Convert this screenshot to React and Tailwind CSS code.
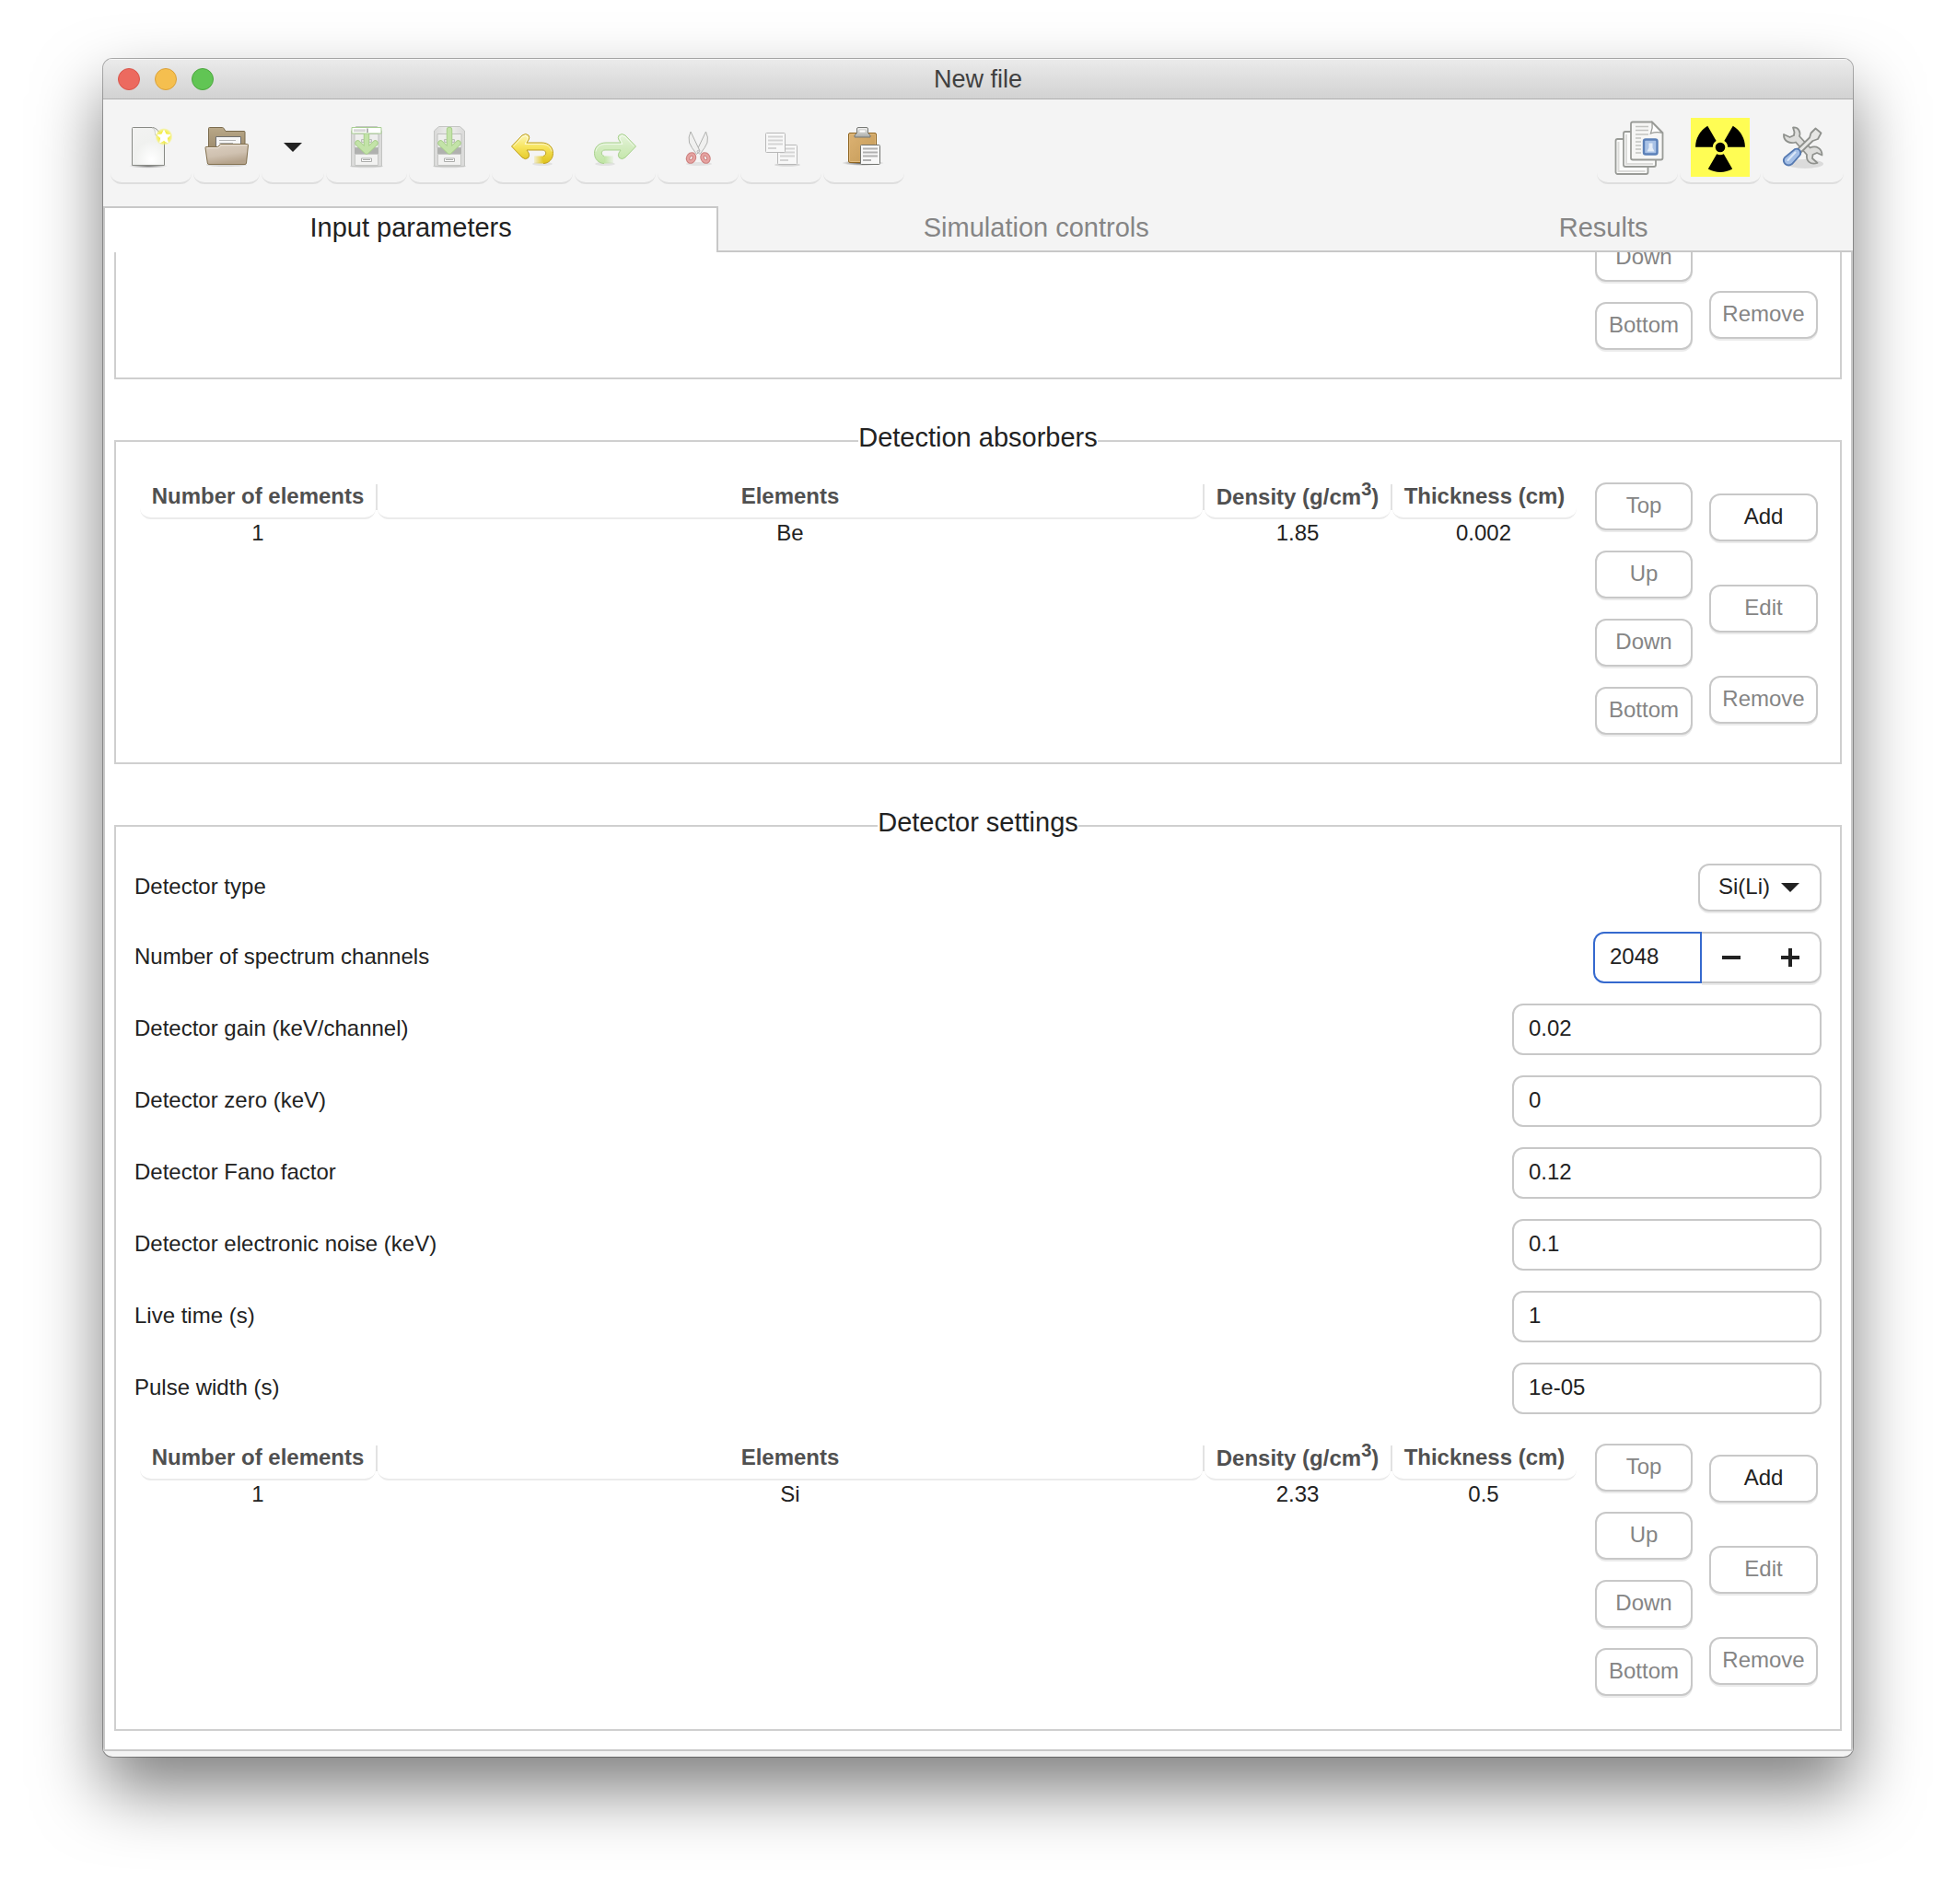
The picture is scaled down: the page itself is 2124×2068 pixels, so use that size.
import React from "react";

const SANS = "font-['Liberation_Sans',Arial,sans-serif]";

function NewIcon() {
  return (
    <svg viewBox="0 0 48 48" className="size-12" aria-hidden="true">
      <defs>
        <radialGradient id="nPage" cx=".6" cy=".85" r="1">
          <stop offset="0" stopColor="#fff" />
          <stop offset=".5" stopColor="#f0f1ef" />
          <stop offset="1" stopColor="#f3f3f2" />
        </radialGradient>
        <radialGradient id="nGlow">
          <stop offset="0" stopColor="#fff" />
          <stop offset=".5" stopColor="#f3ec3c" />
          <stop offset=".8" stopColor="#f5f16a" stopOpacity=".8" />
          <stop offset="1" stopColor="#f5f16a" stopOpacity="0" />
        </radialGradient>
        <radialGradient id="nShade">
          <stop offset="0" stopColor="#000" stopOpacity=".5" />
          <stop offset="1" stopColor="#000" stopOpacity="0" />
        </radialGradient>
      </defs>
      <ellipse cx="21" cy="44.300" rx="21" ry="2.500" fill="url(#nShade)" />
      <path d="M4.500 2.500h21c5 .5 7 5 11.500 9.500q1.500 2 1.500 4v27.500h-35V3.500q0-1 1-1z" fill="url(#nPage)" stroke="#888a85" />
      <path d="M25 3c4 1 3 5 4 8 4 0 7 0 9 4" fill="#fff" stroke="#c6c8c3" />
      <circle cx="38" cy="12.500" r="9.500" fill="url(#nGlow)" />
      <path d="M38 5.500l2.100 4.500 4.900.6-3.600 3.400.9 4.900-4.300-2.400-4.300 2.400.9-4.900-3.600-3.400 4.900-.6z" fill="#fff" stroke="#fff" strokeWidth="1" strokeLinejoin="round" />
    </svg>
  );
}

function OpenIcon() {
  return (
    <svg viewBox="0 0 48 48" className="size-12" aria-hidden="true">
      <defs>
        <linearGradient id="oBack" x1="0" y1="0" x2="0" y2="1">
          <stop offset="0" stopColor="#b9a888" />
          <stop offset="1" stopColor="#8f7d60" />
        </linearGradient>
        <linearGradient id="oFront" x1="0" y1="0" x2=".3" y2="1">
          <stop offset="0" stopColor="#dccfc0" />
          <stop offset=".6" stopColor="#cfc1b0" />
          <stop offset="1" stopColor="#b5a38c" />
        </linearGradient>
      </defs>
      <ellipse cx="24" cy="43" rx="22" ry="2" fill="#000" opacity=".12" />
      <path d="M4.500 38V3.500q0-1 1-1h14q1 0 1.500 1l2 3h20q1 0 1 1V36z" fill="url(#oBack)" stroke="#7a6a4c" />
      <path d="M12.500 26V12.500h27V26z" fill="#f7f7f7" stroke="#6f6f6f" />
      <path d="M16 16.500h18M16 19.500h15" stroke="#b4b4b4" />
      <path d="M1.500 23.500h13l3-3h29q1 0 1 1l-2 19.500q-.3 1.500-1.500 1.500h-39q-1.500 0-1.700-1.500l-2.300-16.500q0-1 .5-1z" fill="url(#oFront)" stroke="#82704f" />
      <path d="M2.800 24.700h12.200l3-3h28" fill="none" stroke="#efe7dc" />
    </svg>
  );
}

function CabinetIcon({ as }) {
  const id = as ? "ca" : "cb";
  return (
    <svg viewBox="0 0 48 48" className="size-12" aria-hidden="true">
      <defs>
        <linearGradient id={id} x1="0" y1="0" x2="1" y2="0">
          <stop offset="0" stopColor="#d9d9d8" />
          <stop offset=".5" stopColor="#efefee" />
          <stop offset="1" stopColor="#d9d9d8" />
        </linearGradient>
      </defs>
      <ellipse cx="24" cy="44.500" rx="18" ry="1.800" fill="#000" opacity=".13" />
      <path d="M7.500 44.500V6l5-4.500h23l5 4.500v38.500z" fill={`url(#${id})`} stroke="#c3c4c2" />
      <path d="M11 9.500h26v15H11z" fill="#eeeeed" stroke="#c0c1bf" />
      <path d="M11 24.500h26v7H11z" fill="#b0b1af" />
      <path d="M11.500 31.500h25v12h-25z" fill="#f2f2f1" stroke="#c5c6c4" />
      <path d="M18.500 15.500h11v3h-11z" fill="#e3e3e2" stroke="#bdbebc" />
      <path d="M18.500 36h11v3.500h-11z" fill="#fff" stroke="#adaeac" />
      <path d="M20 37.500h8" stroke="#adaeac" />
      <path d="M24 5v20M14.500 19.500l9.500 9 9.500-9" fill="none" stroke="#a9cf8c" strokeWidth="6.500" strokeLinecap="round" strokeLinejoin="round" />
      <path d="M24 5v20M14.500 19.500l9.500 9 9.500-9" fill="none" stroke="#c3e3a8" strokeWidth="4.500" strokeLinecap="round" strokeLinejoin="round" />
      {as && (
        <g>
          <path d="M8 2.500h32v6.500H8z" fill="#fff" stroke="#a9cf93" />
          <path d="M10 4.200h13v3H10z" fill="#d8d8d8" />
          <path d="M25 3.500v4.500" stroke="#666" />
        </g>
      )}
    </svg>
  );
}

function ReturnArrow({ redo }) {
  const id = redo ? "redoFill" : "undoFill";
  const edge = redo ? "#a9d18f" : "#bd9e21";
  return (
    <svg viewBox="0 0 48 48" className="size-12" aria-hidden="true">
      <defs>
        <linearGradient id={id} x1="0" y1="0" x2="0" y2="1">
          <stop offset="0" stopColor={redo ? "#e6f4dc" : "#fdf7b8"} />
          <stop offset=".45" stopColor={redo ? "#d3ecc0" : "#f7e45c"} />
          <stop offset="1" stopColor={redo ? "#c0e5a4" : "#dfc21c"} />
        </linearGradient>
        <linearGradient id={id + "F"} x1="24" y1="0" x2="36" y2="0" gradientUnits="userSpaceOnUse">
          <stop offset="0" stopColor={redo ? "#c0e5a4" : "#e8d02c"} stopOpacity="0" />
          <stop offset="1" stopColor={redo ? "#c0e5a4" : "#e3c824"} />
        </linearGradient>
      </defs>
      <g transform={redo ? "matrix(-1 0 0 1 48 0)" : undefined}>
        <ellipse cx="35" cy="42" rx="11" ry="2" fill="#000" opacity=".07" />
        <path d="M26 33.500h10.500v8H26z" fill={`url(#${id}F)`} />
        <path d="M1.500 23L13 11q4-3 7 0 1.500 2.500 0 5l-2 3h16c8 0 12.500 5 12.500 11.500 0 6-4.500 11-10.500 11v-8c4-.5 4-6.500-.5-6.500H18l2 3q1.500 3-.5 5.500-3 2.500-6.500-.5z" fill={`url(#${id})`} />
        <path d="M36 41.500c6 0 10.500-5 10.500-11C46.500 24 42 19 34 19H18l2-3q1.500-2.500 0-5-3-3-7 0L1.500 23 13 35q3.500 3 6.500.5 2-2.500.5-5.500l-2-3h17c4.500 0 5 5.500 1 6.500" fill="none" stroke={edge} />
        <path d="M3.500 23L13.500 12.500q3-2 5 0 1 2-.5 4l-2 4h18c6 0 10 3 11 8" fill="none" stroke="#fff" opacity=".6" />
      </g>
    </svg>
  );
}

function CutIcon() {
  return (
    <svg viewBox="0 0 48 48" className="size-12" aria-hidden="true">
      <ellipse cx="25" cy="42" rx="14" ry="2" fill="#000" opacity=".07" />
      <path d="M32.500 7q3 6 1.500 12-2 5-8 12.500L22.500 28z" fill="#f0f0ef" stroke="#b0b1af" />
      <path d="M16 7q-3 6-1.500 12 2 5 8 12.500L26 28z" fill="#f0f0ef" stroke="#b0b1af" />
      <g fill="none">
        <g stroke="#cb7f7d" strokeWidth="4.600">
          <ellipse cx="16.500" cy="35.500" rx="3.200" ry="4.200" transform="rotate(25 16.500 35.500)" />
          <ellipse cx="32" cy="35.500" rx="3.200" ry="4.200" transform="rotate(-25 32 35.500)" />
        </g>
        <g stroke="#e6a3a1" strokeWidth="2.600">
          <ellipse cx="16.500" cy="35.500" rx="3.200" ry="4.200" transform="rotate(25 16.500 35.500)" />
          <ellipse cx="32" cy="35.500" rx="3.200" ry="4.200" transform="rotate(-25 32 35.500)" />
        </g>
      </g>
      <circle cx="24.300" cy="28.500" r="1.300" fill="#ddd" stroke="#aaa" strokeWidth=".6" />
    </svg>
  );
}

function Sheet({ x, y, s, stroke, line }) {
  return (
    <g>
      <rect x={x} y={y} width={s} height={s} rx="1" fill="#f8f8f8" stroke={stroke} />
      <path
        d={`M${x + 2.5} ${y + 4}h${s - 5}M${x + 2.5} ${y + 8}h${s - 5}M${x + 2.5} ${y + 12}h${s - 5}M${x + 2.5} ${y + 16.500}h9`}
        stroke={line}
        strokeWidth="2"
      />
    </g>
  );
}

function CopyIcon() {
  return (
    <svg viewBox="0 0 48 48" className="size-12" aria-hidden="true">
      <ellipse cx="31" cy="43" rx="14" ry="1.800" fill="#000" opacity=".12" />
      <Sheet x={20.500} y={21.500} s={21} stroke="#b8b8b8" line="#d4d4d4" />
      <Sheet x={7.500} y={8.500} s={21} stroke="#b8b8b8" line="#d4d4d4" />
    </svg>
  );
}

function PasteIcon() {
  return (
    <svg viewBox="0 0 48 48" className="size-12" aria-hidden="true">
      <defs>
        <linearGradient id="board" x1="0" y1="0" x2="1" y2="1">
          <stop offset="0" stopColor="#dcb273" />
          <stop offset="1" stopColor="#c49a57" />
        </linearGradient>
        <linearGradient id="clip" x1="0" y1="0" x2="0" y2="1">
          <stop offset="0" stopColor="#f4f4f4" />
          <stop offset="1" stopColor="#a7a9a5" />
        </linearGradient>
        <radialGradient id="pShade">
          <stop offset="0" stopColor="#000" stopOpacity=".7" />
          <stop offset="1" stopColor="#000" stopOpacity="0" />
        </radialGradient>
      </defs>
      <ellipse cx="23" cy="41" rx="23" ry="3" fill="url(#pShade)" />
      <rect x="7.500" y="8.500" width="30" height="32" rx="1.500" fill="url(#board)" stroke="#8f6420" />
      <rect x="8.500" y="9.500" width="28" height="30" rx="1" fill="none" stroke="#e0bb80" />
      <path d="M16.500 8.500V4q0-1.500 1.500-1.500h9q1.500 0 1.500 1.500v4.500l2.500 2.500v2h-17v-2z" fill="url(#clip)" stroke="#777975" />
      <path d="M19 5h7v3h-7z" fill="#fff" stroke="#c4c5c2" strokeWidth=".8" />
      <Sheet x={20.500} y={21.500} s={21} stroke="#70726e" line="#b0b0b0" />
    </svg>
  );
}

function PagesIcon() {
  return (
    <svg viewBox="0 0 64 64" className="size-16" aria-hidden="true">
      <g fill="#fbfbfa" stroke="#999b97" strokeWidth="1.800">
        <rect x="8.500" y="23" width="35" height="38" rx="2" />
        <rect x="17" y="15" width="35" height="38" rx="2" />
        <path d="M27 4.500h21L59.500 16v27.500q0 2-2 2H27q-2 0-2-2v-37q0-2 2-2z" fill="#f6f6f5" />
      </g>
      <path d="M11.500 26v32h29M20 18v32h29" fill="none" stroke="#dcdcda" strokeWidth="2" />
      <path d="M48 5q1 6-1.500 12 6.500-2.500 12.500-.5z" fill="#fff" stroke="#999b97" strokeWidth="1.300" />
      <path d="M30 9.500h14M30 13.500h14M30 18h14M30 22h6M30 26h6M30 30h6M30 34h6M30 38h6" stroke="#c2c3c0" strokeWidth="1.500" />
      <rect x="39" y="23.500" width="14.500" height="16" rx="2" fill="#a9c2e6" stroke="#5b80b8" strokeWidth="2.400" />
      <path d="M44.500 27.500h4v5l2 4h-8l2-4z" fill="#e4edf8" />
    </svg>
  );
}

const BLADE = "M28.200 39.200a8 8 0 0 0 7.600 0L45.200 55.500a27 27 0 0 1-26.400 0z";

function RadiationIcon() {
  return (
    <svg viewBox="0 0 64 64" className="size-16" aria-hidden="true">
      <rect width="64" height="64" fill="#fffd54" />
      <circle cx="32" cy="32" r="5.300" />
      <path d={BLADE} />
      <path d={BLADE} transform="rotate(120 32 32)" />
      <path d={BLADE} transform="rotate(240 32 32)" />
    </svg>
  );
}

function ToolsIcon() {
  return (
    <svg viewBox="0 0 48 48" className="size-12" aria-hidden="true">
      <ellipse cx="26" cy="42" rx="20" ry="5" fill="#000" opacity=".1" />
      <g stroke="#8f918d" strokeWidth="1.800" strokeLinejoin="round">
        <path d="M13 2.500c6-.5 8.500 4.500 7 9.500l11.500 12.500c7-3 13 1 13 8l-5.500-2.500-4.500 2-.5 4 5.500 5c-8 2.500-12.500-2.500-11.500-9L16 18.500C9 20.500 2.500 17 3 10l6.500 3 4.500-2 .5-3.500z" fill="#dededc" />
        <path d="M37.500 3.500l6 5-3.500 6.500-5.500 2L21 30l-3.500-3.500L31 13.500l1.500-5z" fill="#e6e6e4" />
      </g>
      <path d="M15 26q3.500-1 5.500 1.500 1.500 3 0 5L12 42q-4 3-7.500 0-3-3.500-.5-7z" fill="#a4bfe6" stroke="#5478b0" strokeWidth="1.800" />
      <path d="M15.500 29.500L7.500 38" stroke="#dbe7f7" strokeWidth="2" strokeLinecap="round" />
    </svg>
  );
}

function Triangle() {
  return (
    <svg viewBox="0 0 20 10" className="h-[10px] w-5 shrink-0" aria-hidden="true">
      <path d="M0 0h20L10 10z" fill="#222" />
    </svg>
  );
}

function ToolButton({ label, width = "w-[88px]", disabled, children }) {
  return (
    <button
      type="button"
      aria-label={label}
      disabled={disabled}
      className={`${width} flex h-20 shrink-0 items-center justify-center rounded-b-[12px] border-b-2 border-[#dedede] pt-[2px]`}
    >
      {children}
    </button>
  );
}

const TOOLS_LEFT = [
  { label: "New", icon: <NewIcon /> },
  { label: "Open", icon: <OpenIcon />, width: "w-[72px]" },
  { label: "Open recent", icon: <Triangle />, width: "w-[68px]" },
  { label: "Save as", icon: <CabinetIcon as />, disabled: true },
  { label: "Save", icon: <CabinetIcon />, disabled: true },
  { label: "Undo", icon: <ReturnArrow /> },
  { label: "Redo", icon: <ReturnArrow redo />, disabled: true },
  { label: "Cut", icon: <CutIcon />, disabled: true },
  { label: "Copy", icon: <CopyIcon />, disabled: true },
  { label: "Paste", icon: <PasteIcon /> },
];

const TOOLS_RIGHT = [
  { label: "Batch mode", icon: <PagesIcon /> },
  { label: "X-ray sources", icon: <RadiationIcon /> },
  { label: "Preferences", icon: <ToolsIcon /> },
];

function Toolbar() {
  return (
    <div role="toolbar" className="flex justify-between pt-3 pr-[10px] pb-6 pl-2">
      {[TOOLS_LEFT, TOOLS_RIGHT].map((tools, i) => (
        <div key={i} className="flex gap-[2px]">
          {tools.map((t) => (
            <ToolButton key={t.label} label={t.label} width={t.width} disabled={t.disabled}>
              {t.icon}
            </ToolButton>
          ))}
        </div>
      ))}
    </div>
  );
}

function Tabs() {
  const base = "flex-auto h-[50px] text-[29px] leading-8";
  return (
    <div role="tablist" className="flex">
      <button type="button" role="tab" aria-selected="true" className={`${base} border-2 border-b-0 border-[#c8c8c8] bg-white pb-[6px] text-[#222]`}>
        Input parameters
      </button>
      {["Simulation controls", "Results"].map((t) => (
        <button key={t} type="button" role="tab" aria-selected="false" className={`${base} border-b-2 border-[#c8c8c8] pt-[2px] pb-1 text-[#858585]`}>
          {t}
        </button>
      ))}
    </div>
  );
}

function Btn({ children, enabled, width }) {
  return (
    <button
      type="button"
      disabled={!enabled}
      className={`${width} ${enabled ? "text-[#222]" : "text-[#858585]"} h-[52px] shrink-0 rounded-[12px] border-2 border-[#c8c8c8] bg-white pb-[2px] text-2xl shadow-[0_2px_0_#ebebeb]`}
    >
      {children}
    </button>
  );
}

function OrderButtons({ labels = ["Top", "Up", "Down", "Bottom"] }) {
  return (
    <div className="flex flex-col gap-[22px]">
      {labels.map((l) => (
        <Btn key={l} width="w-[106px]">{l}</Btn>
      ))}
    </div>
  );
}

const COLUMNS = [
  { title: "Number of elements", width: "w-[258px]" },
  { title: "Elements", width: "" },
  { title: <>Density (g/cm<sup className="text-[20px]">3</sup>)</>, width: "w-[204px]", leading: "leading-8" },
  { title: "Thickness (cm)", width: "w-[200px]" },
];

function LayerTable({ label, row }) {
  return (
    <div className="flex items-start">
      <table aria-label={label} className="w-full table-fixed text-2xl">
        <thead>
          <tr>
            {COLUMNS.map((c, i) => (
              <th key={i} scope="col" className={`${c.width} p-0 font-bold text-[#505050]`}>
                <div className="flex">
                  <div className={`${c.leading ?? "leading-[30px]"} h-10 flex-1 rounded-b-[12px] border-b-2 border-[#ebebeb] text-center whitespace-nowrap`}>
                    {c.title}
                  </div>
                  {i < 3 && <div className="mt-[2px] h-7 w-[2px] bg-[#e2e2e2]" />}
                </div>
              </th>
            ))}
          </tr>
        </thead>
        <tbody>
          <tr>
            {row.map((v, i) => (
              <td key={i} className="p-0 pr-[2px] text-center leading-[30px] text-[#222]">{v}</td>
            ))}
          </tr>
        </tbody>
      </table>
      <div className="ml-5">
        <OrderButtons />
      </div>
      <div className="mt-3 ml-[18px] flex flex-col gap-[47px]">
        <Btn width="w-[118px]" enabled>Add</Btn>
        <Btn width="w-[118px]">Edit</Btn>
        <Btn width="w-[118px]">Remove</Btn>
      </div>
    </div>
  );
}

function Group({ title, className, children }) {
  return (
    <section className={`${className} mx-[10px] border-2 border-[#cfcfcf]`}>
      <h2 className="mx-auto -mt-5 h-8 w-fit bg-white text-[29px] leading-[30px] text-[#222]">{title}</h2>
      {children}
    </section>
  );
}

const FIELDS = [
  ["gain", "Detector gain (keV/channel)", "0.02"],
  ["zero", "Detector zero (keV)", "0"],
  ["fano", "Detector Fano factor", "0.12"],
  ["noise", "Detector electronic noise (keV)", "0.1"],
  ["live", "Live time (s)", "1"],
  ["pulse", "Pulse width (s)", "1e-05"],
];

function DetectorForm() {
  const row = "flex items-center justify-between";
  return (
    <div className="flex flex-col gap-[22px] px-5 text-2xl text-[#222]">
      <div className={row}>
        <label htmlFor="type" className="pb-[2px]">Detector type</label>
        <div className="relative flex items-center">
          <select id="type" defaultValue="Si(Li)" className="h-[52px] w-[134px] appearance-none rounded-[12px] border-2 border-[#c8c8c8] bg-white pb-[2px] pl-5 shadow-[0_2px_0_#ebebeb]">
            <option>Si(Li)</option>
          </select>
          <div className="pointer-events-none absolute right-6">
            <Triangle />
          </div>
        </div>
      </div>
      <div className={row}>
        <label htmlFor="channels" className="pb-[2px]">Number of spectrum channels</label>
        <div className="flex h-14">
          <input id="channels" type="text" defaultValue="2048" className="w-[118px] rounded-l-[12px] border-2 border-[#3569ce] bg-white pb-[2px] pl-4 outline-none" />
          <div className="flex w-[130px] rounded-r-[12px] border-2 border-l-0 border-[#c8c8c8] shadow-[0_2px_0_#ebebeb]">
            <button type="button" aria-label="Decrease" className="flex flex-1 items-center justify-center">
              <svg viewBox="0 0 20 20" className="size-5"><path d="M0 8h20v4H0z" fill="#222" /></svg>
            </button>
            <button type="button" aria-label="Increase" className="flex flex-1 items-center justify-center">
              <svg viewBox="0 0 20 20" className="size-5"><path d="M0 8h8V0h4v8h8v4h-8v8H8v-8H0z" fill="#222" /></svg>
            </button>
          </div>
        </div>
      </div>
      {FIELDS.map(([id, label, value]) => (
        <div key={id} className={row}>
          <label htmlFor={id} className="pb-[2px]">{label}</label>
          <input id={id} type="text" defaultValue={value} className="h-14 w-[336px] rounded-[12px] border-2 border-[#c8c8c8] bg-white pb-[2px] pl-4 outline-none" />
        </div>
      ))}
    </div>
  );
}

export default function App() {
  return (
    <div className={`${SANS} min-h-screen bg-white px-28 pt-16 pb-40`}>
      <div className="overflow-hidden rounded-[10px] bg-[#f4f4f4] shadow-[0_0_0_1px_rgba(0,0,0,0.3),0_36px_72px_rgba(0,0,0,0.5)]">
        <header className="grid h-11 grid-cols-3 items-center border-b border-[#b0b0b0] bg-linear-to-b from-[#ebebeb] to-[#d2d2d2] px-4 shadow-[inset_0_1px_0_#f6f6f6]">
          <div className="flex gap-4">
            <button type="button" aria-label="Close" className="size-6 rounded-full border border-[#d8564c] bg-[#ec6a5f]" />
            <button type="button" aria-label="Minimise" className="size-6 rounded-full border border-[#d9a13b] bg-[#f5bf4f]" />
            <button type="button" aria-label="Zoom" className="size-6 rounded-full border border-[#4da73f] bg-[#61c554]" />
          </div>
          <h1 className="text-center text-[27px] leading-8 text-[#404040]">New file</h1>
        </header>
        <Toolbar />
        <Tabs />
        <main className="overflow-hidden border-x-2 border-b-2 border-[#c8c8c8] bg-white pb-5">
          <section className="mx-[10px] flex h-[138px] items-start justify-end border-2 border-t-0 border-[#cfcfcf] pr-6">
            <div className="-mt-5">
              <OrderButtons labels={["Down", "Bottom"]} />
            </div>
            <div className="mt-[42px] ml-[18px]">
              <Btn width="w-[118px]">Remove</Btn>
            </div>
          </section>
          <Group title="Detection absorbers" className="mt-[66px] pb-[30px]">
            <div className="mt-8 pr-6 pl-[26px]">
              <LayerTable label="Detection absorbers" row={["1", "Be", "1.85", "0.002"]} />
            </div>
          </Group>
          <Group title="Detector settings" className="mt-[66px] pb-9">
            <div className="mt-7">
              <DetectorForm />
            </div>
            <div className="mt-8 pr-6 pl-[26px]">
              <LayerTable label="Detector crystal" row={["1", "Si", "2.33", "0.5"]} />
            </div>
          </Group>
        </main>
        <footer className="h-[6px]" />
      </div>
    </div>
  );
}
